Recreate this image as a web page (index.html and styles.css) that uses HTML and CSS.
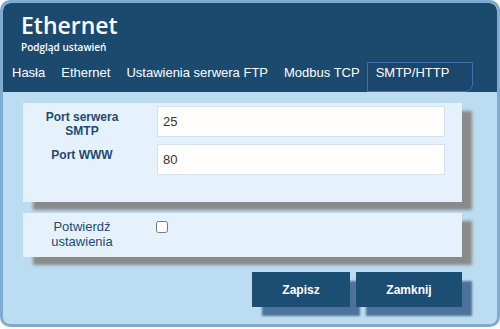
FILE: index.html
```html
<!DOCTYPE html>
<html>
  <head>
    <meta charset="UTF-8">
    <title>Ethernet</title>
    <link rel="stylesheet" href="styles.css">
  </head>
  <body>
    <div class="window">
      <div class="header">
        <div class="title">
          <h1>Ethernet</h1>
          <p>Podgląd ustawień</p>
        </div>
        <nav class="tabs">
          <a class="tab">Hasła</a>
          <a class="tab">Ethernet</a>
          <a class="tab">Ustawienia serwera FTP</a>
          <a class="tab">Modbus TCP</a>
          <a class="tab active">SMTP/HTTP</a>
        </nav>
      </div>
      <div class="content">
        <div class="panel">
          <label class="field-label" for="smtp">Port serwera SMTP</label>
          <input class="field-input" type="text" id="smtp" value="25">
          <label class="field-label" for="www">Port WWW</label>
          <input class="field-input" type="text" id="www" value="80">
        </div>
        <div class="panel confirm">
          <label class="confirm-label" for="potwierdz">Potwierdź<br>ustawienia</label>
          <div><input type="checkbox" id="potwierdz" class="check"></div>
        </div>
        <div class="buttons">
          <button type="button" class="btn btn-save">Zapisz</button>
          <button type="button" class="btn btn-close">Zamknij</button>
        </div>
      </div>
    </div>
  </body>
</html>
```

FILE: styles.css
```css
body {
  margin: 0;
  background: #ffffff;
  font-family: "Liberation Sans", Arial, sans-serif;
}
.window {
  box-sizing: border-box;
  width: 500px;
  height: 327px;
  border: 3px solid #80abd0;
  border-radius: 10px;
  background-color: #bcdcf1;
  overflow: hidden;
}
.header {
  background-color: #1c4a6e;
  border-radius: 8px 8px 0 0;
}
.title {
  padding: 8px 0 9px 18px;
  color: #ffffff;
}
.title h1 {
  margin: 0;
  font-family: "Open Sans", sans-serif;
  font-size: 23px;
  font-weight: 600;
  line-height: 28px;
}
.title p {
  margin: 2px 0 0;
  font-family: "Open Sans", sans-serif;
  font-size: 10px;
  font-weight: 600;
  line-height: 12px;
}
.tabs {
  display: flex;
  height: 30px;
  padding-left: 1px;
}
.tab {
  box-sizing: border-box;
  height: 30px;
  padding: 3px 8px 0;
  color: #ffffff;
  font-size: 13px;
  line-height: 16px;
  cursor: pointer;
}
.tab.active {
  margin-left: -1px;
  padding: 2px 23px 0 8px;
  border: 1px solid #3a72b3;
  border-radius: 0 0 8px 0;
  background-color: #1a476b;
}
.content {
  padding: 11px 35px 0 20px;
}
.panel {
  display: grid;
  grid-template-columns: 118px 288px;
  column-gap: 16px;
  row-gap: 6px;
  padding: 3px 17px 27px 0;
  background-color: #e6f2fb;
  box-shadow: 10px 8px 3px #8a8a8a;
}
.field-label {
  padding: 4px 16px 0;
  text-align: center;
  color: #1f4a70;
  font-size: 12px;
  font-weight: bold;
  line-height: 14px;
}
.field-input {
  box-sizing: border-box;
  height: 31px;
  margin: 0;
  padding: 0 5px;
  border: 1px solid #d3e2ef;
  background-color: #fffefc;
  color: #333333;
  font-family: "Liberation Sans", Arial, sans-serif;
  font-size: 13px;
  outline: none;
}
.panel.confirm {
  margin-top: 11px;
  padding: 6px 17px 8px 0;
}
.confirm-label {
  text-align: center;
  color: #1f4a70;
  font-size: 13px;
  line-height: 15px;
}
.check {
  width: 12px;
  height: 12px;
  margin: 0 0 0 -1px;
}
.buttons {
  display: flex;
  justify-content: flex-end;
  gap: 6px;
  margin-top: 15px;
}
.btn {
  height: 35px;
  border: none;
  background-color: #1c4d73;
  color: #ffffff;
  font-family: "Liberation Sans", Arial, sans-serif;
  font-size: 12px;
  font-weight: bold;
  box-shadow: 10px 9px 2px rgba(40, 80, 125, 0.75);
  cursor: pointer;
}
.btn-save {
  width: 98px;
}
.btn-close {
  width: 106px;
}
```
